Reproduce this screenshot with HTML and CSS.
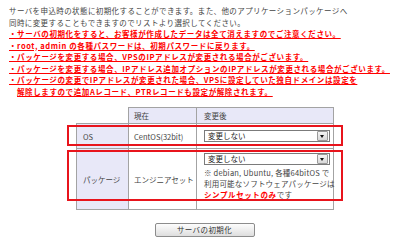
FILE: index.html
```html
<!DOCTYPE html>
<html lang="ja">
<head>
    <meta charset="UTF-8" />
    <title>サーバの初期化</title>
    <link rel="stylesheet" href="styles.css">
</head>
<body>
    <div class="page">
        <p class="lead">サーバを申込時の状態に初期化することができます。また、他のアプリケーションパッケージへ<br>同時に変更することもできますのでリストより選択してください。</p>
        <ul class="notes">
            <li>・サーバの初期化をすると、お客様が作成したデータは全て消えますのでご注意ください。</li>
            <li>・root, admin の各種パスワードは、初期パスワードに戻ります。</li>
            <li>・パッケージを変更する場合、VPSのIPアドレスが変更される場合がございます。</li>
            <li>・パッケージを変更する場合、IPアドレス追加オプションのIPアドレスが変更される場合がございます。</li>
            <li>・パッケージの変更でIPアドレスが変更された場合、VPSに設定していた独自ドメインは設定を<br>解除しますので追加Aレコード、PTRレコードも設定が解除されます。</li>
        </ul>

        <div class="form-wrap">
            <table class="pkg-table">
                <colgroup>
                    <col class="col-label">
                    <col class="col-cur">
                    <col class="col-after">
                </colgroup>
                <tr class="head-row">
                    <th class="blank"></th>
                    <th>現在</th>
                    <th class="after-head">変更後</th>
                </tr>
                <tr class="os-row">
                    <td class="label">OS</td>
                    <td class="cur">CentOS(32bit)</td>
                    <td class="after">
                        <div class="select"><span class="select-text">変更しない</span><span class="select-btn"></span></div>
                    </td>
                </tr>
                <tr class="pkg-row">
                    <td class="label">パッケージ</td>
                    <td class="cur">エンジニアセット</td>
                    <td class="after">
                        <div class="select"><span class="select-text">変更しない</span><span class="select-btn"></span></div>
                        <p class="pkg-note">※ debian, Ubuntu, 各種64bitOS で<br>利用可能なソフトウェアパッケージは<br><strong>シンプルセットのみ</strong>です</p>
                    </td>
                </tr>
            </table>
            <!-- red highlight frames drawn over the two rows -->
            <div class="mark mark-os"></div>
            <div class="mark mark-pkg"></div>
        </div>

        <div class="actions">
            <button class="btn">サーバの初期化</button>
        </div>
    </div>
</body>
</html>
```

FILE: styles.css
```css
body {
    margin: 0;
    font-family: "Noto Sans CJK JP", sans-serif;
    font-size: 7.5px;
    color: #444;
    background-color: #fff;
}
.page {
    padding: 5px 0 0 9px;
}
.lead {
    margin: 0;
    line-height: 11.5px;
    letter-spacing: 0.4px;
}
.notes {
    list-style: none;
    margin: 0;
    padding: 0;
    line-height: 11.5px;
    color: #f00;
    font-weight: bold;
    letter-spacing: 0.6px;
}
.notes li {
    padding-left: 8px;
    text-indent: -8px;
    text-decoration: underline;
}
.form-wrap {
    position: relative;
    width: 257px;
    margin: 10px 0 0 67px;
}
.pkg-table {
    border-collapse: collapse;
    table-layout: fixed;
    width: 257px;
    font: inherit;
}
.col-label {
    width: 52px;
}
.col-cur {
    width: 68px;
}
.col-after {
    width: 137px;
}
.pkg-table th,
.pkg-table td {
    border: 1px solid #a3a3a3;
    text-align: left;
    font-weight: normal;
    color: #444;
    padding: 0 1px 0 5px;
    line-height: 11px;
    white-space: nowrap;
}
.pkg-table th {
    height: 15px;
    background-color: #e8e8f8;
}
.pkg-table th.blank {
    background: none;
    border-top: none;
    border-left: none;
}
.pkg-table th.after-head {
    padding-left: 7px;
}
.pkg-table td.label {
    background-color: #e8e8f8;
    padding-left: 6px;
}
.os-row td {
    height: 24px;
}
.pkg-row td {
    height: 53px;
}
.pkg-table td.after {
    padding: 0 4px 0 7px;
}
.pkg-row td.after {
    padding-top: 4px;
    padding-bottom: 3px;
    vertical-align: top;
}
.select {
    display: flex;
    align-items: center;
    height: 10px;
    width: 120px;
    border: 1px solid #7b7b7b;
    background-color: #fff;
    padding: 0 1px 0 3px;
}
.select-text {
    flex: 1;
    line-height: 10px;
    color: #222;
}
.select-btn {
    position: relative;
    width: 9px;
    height: 8px;
    border: 1px solid #9a9a9a;
    border-radius: 1px;
    background: linear-gradient(#f4f4f4, #d8d8d8);
}
.select-btn::after {
    content: "";
    position: absolute;
    left: 2px;
    top: 3px;
    border-left: 2.5px solid transparent;
    border-right: 2.5px solid transparent;
    border-top: 3px solid #111;
}
.pkg-note {
    margin: 2px 0 0;
    line-height: 11px;
    letter-spacing: 0.2px;
}
.pkg-note strong {
    color: #f00;
    letter-spacing: 0.6px;
}
.mark {
    position: absolute;
    left: -9px;
    right: -10px;
    border: 2px solid #e8141c;
}
.mark-os {
    top: 18px;
    height: 17px;
}
.mark-pkg {
    top: 43px;
    height: 47px;
}
.actions {
    width: 257px;
    margin: 13px 0 0 67px;
    text-align: center;
}
.btn {
    width: 100px;
    height: 14px;
    padding: 0;
    font-family: "Noto Sans CJK JP", sans-serif;
    font-size: 7.5px;
    letter-spacing: 0.4px;
    line-height: 12px;
    color: #333;
    border: 1px solid #8c8c8c;
    border-radius: 2px;
    background: linear-gradient(#fdfdfd, #dedede);
}
```
